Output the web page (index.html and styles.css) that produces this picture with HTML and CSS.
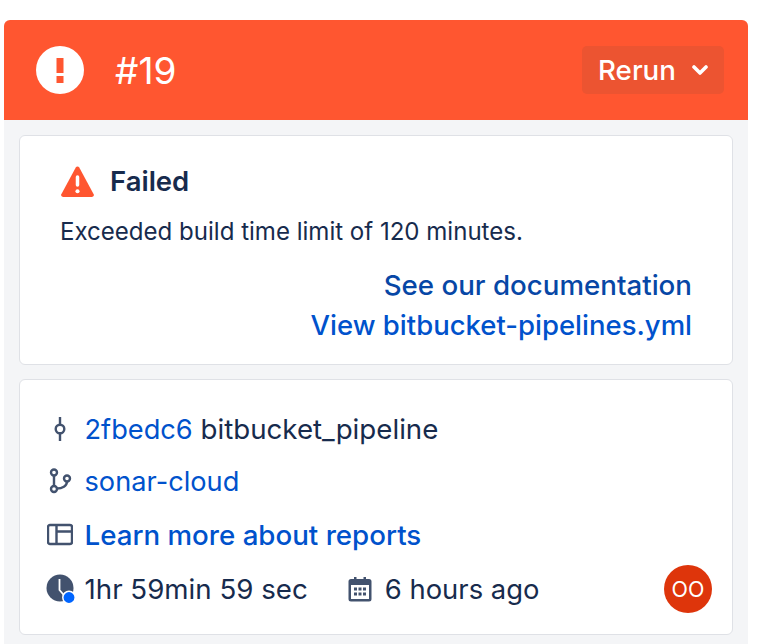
FILE: index.html
```html
<!DOCTYPE html>
<html lang="en">
<head>
<meta charset="utf-8">
<title>Pipeline #19</title>
<link rel="stylesheet" href="styles.css">
</head>
<body>
<main class="panel">
  <header class="banner">
    <svg class="banner-icon" viewBox="0 0 48 48" aria-hidden="true"><circle cx="24" cy="24" r="24" fill="#fff"/><rect x="20.5" y="12" width="7" height="15" fill="#ff5630"/><rect x="20.5" y="30" width="7" height="7" fill="#ff5630"/></svg>
    <h1 class="build-no">#19</h1>
    <button class="rerun" type="button">Rerun
      <svg class="chev" viewBox="0 0 16 12" aria-hidden="true"><path d="M2 3l6 6 6-6" fill="none" stroke="#fff" stroke-width="3.600" stroke-linecap="round" stroke-linejoin="round"/></svg>
    </button>
  </header>
  <div class="body">
    <section class="card failed">
      <div class="failed-head">
        <svg class="warn" viewBox="0 0 34 32" aria-hidden="true"><path d="M17 1.500c.7 0 1.300.4 1.700 1l14 26c.6 1.200-.2 2.500-1.600 2.500H2.900c-1.400 0-2.200-1.300-1.600-2.500l14-26c.4-.6 1-1 1.700-1z" fill="#ff5630"/><rect x="15.300" y="10" width="3.400" height="11" rx="1.700" fill="#fff"/><circle cx="17" cy="25.500" r="2" fill="#fff"/></svg>
        <h2 class="failed-title">Failed</h2>
      </div>
      <p class="failed-msg">Exceeded build time limit of 120 minutes.</p>
      <div class="failed-links">
        <a class="link link-dark" href="#">See our documentation</a>
        <a class="link" href="#">View bitbucket-pipelines.yml</a>
      </div>
    </section>
    <section class="card info">
      <div class="row row-commit">
        <span class="ico-slot">
          <svg class="ico" viewBox="0 0 26 26" aria-hidden="true"><path d="M13 1v7.500M13 17.500V25" stroke="#42526e" stroke-width="2.400" fill="none"/><circle cx="13" cy="13" r="4.300" fill="none" stroke="#42526e" stroke-width="2.400"/></svg>
        </span>
        <span><a class="text-link" href="#">2fbedc6</a> bitbucket_pipeline</span>
      </div>
      <div class="row row-branch">
        <span class="ico-slot">
          <svg class="ico" viewBox="0 0 26 26" aria-hidden="true"><g fill="none" stroke="#42526e" stroke-width="2.400"><circle cx="7" cy="4.500" r="3"/><circle cx="7" cy="21" r="3"/><circle cx="20" cy="10.500" r="3"/><path d="M7 7.500V18M10 20.500c5 0 10-2.500 10-7"/></g></svg>
        </span>
        <a class="text-link" href="#">sonar-cloud</a>
      </div>
      <div class="row row-reports">
        <span class="ico-slot">
          <svg class="ico" viewBox="0 0 26 26" aria-hidden="true"><g fill="none" stroke="#42526e" stroke-width="2.400"><rect x="1" y="3" width="24" height="19" rx="2"/><path d="M9.500 3v19M9.500 9.500H25"/></g></svg>
        </span>
        <a class="text-link text-link-strong" href="#">Learn more about reports</a>
      </div>
      <div class="row row-meta">
        <span class="ico-slot">
          <svg class="ico-clock" viewBox="0 0 30 30" aria-hidden="true"><circle cx="14" cy="14" r="13.500" fill="#42526e"/><path d="M13.500 5v11l6 7" fill="none" stroke="#fff" stroke-width="1.800"/><circle cx="23" cy="23.500" r="6.200" fill="#0065ff" stroke="#fff" stroke-width="1.500"/></svg>
        </span>
        <span class="duration">1hr 59min 59 sec</span>
        <svg class="ico-cal" viewBox="0 0 24 26" aria-hidden="true"><path d="M3 3h3V1h2.500v2h7V1H18v2h3a2.500 2.500 0 0 1 2.500 2.500V23a2.500 2.500 0 0 1-2.500 2.500H3A2.500 2.500 0 0 1 .5 23V5.500A2.500 2.500 0 0 1 3 3z" fill="#42526e"/><rect x="3" y="9" width="18" height="14" fill="#fff"/><path d="M6 11.500h3v3H6zM10.500 11.500h3v3h-3zM15 11.500h3v3h-3zM6 16.500h3v3H6zM10.500 16.500h3v3h-3zM15 16.500h3v3h-3z" fill="#42526e"/></svg>
        <span class="ago">6 hours ago</span>
        <span class="avatar">OO</span>
      </div>
    </section>
  </div>
</main>
</body>
</html>
```
FILE: styles.css
```css
* { box-sizing: border-box; }
html, body { height: 100%; }
body {
  margin: 0;
  padding: 20px 26px 0 4px;
  background: #fff;
  font-family: Inter, "Liberation Sans", sans-serif;
  color: #172b4d;
  overflow: hidden;
}
.panel {
  height: 624px;
  background: #f4f5f7;
  border-radius: 6px 6px 0 0;
  overflow: hidden;
}
.banner {
  height: 100px;
  background: #ff5630;
  display: flex;
  align-items: center;
  padding: 0 24px 0 32px;
}
.banner-icon { width: 48px; height: 48px; flex: none; }
.build-no {
  margin: 0 0 0 31px;
  font-size: 37px;
  font-weight: 400;
  color: #fff;
}
.rerun {
  margin-left: auto;
  width: 142px;
  height: 48px;
  border: 0;
  border-radius: 5px;
  background: #ec5431;
  color: #fff;
  font: 500 27.700px Inter, "Liberation Sans", sans-serif;
  display: flex;
  align-items: center;
  justify-content: center;
  gap: 16px;
  padding: 0;
}
.chev { width: 16px; height: 12px; }
.body {
  padding: 15px 15px 0;
  display: flex;
  flex-direction: column;
  gap: 14px;
}
.card {
  background: #fff;
  border: 1px solid #dfe1e6;
  border-radius: 6px;
}
.failed { height: 230px; padding: 27px 40px 0 41px; }
.failed-head { display: flex; align-items: center; gap: 15px; height: 36px; }
.warn { width: 35px; height: 33px; margin-left: -1px; flex: none; }
.failed-title { margin: 0; font-size: 27.500px; font-weight: 600; color: #172b4d; }
.failed-msg { margin: 15px 0 0 -1px; font-size: 24.050px; line-height: 36px; color: #172b4d; }
.failed-links { margin-top: 17px; display: flex; flex-direction: column; align-items: flex-end; gap: 4px; }
.link { font-size: 27.500px; line-height: 36px; font-weight: 500; color: #0052cc; text-decoration: none; }
.link-dark { color: #0747a6; font-size: 27.700px; }
.info { height: 256px; padding: 29px 20px 0 26px; display: flex; flex-direction: column; }
.row { display: flex; align-items: center; font-size: 27.700px; height: 40px; }
.row-branch { margin-top: 12px; }
.row-reports { margin-top: 14px; }
.row-meta { margin-top: 14px; }
.ico-slot { width: 38.500px; flex: none; display: flex; justify-content: flex-start; align-items: center; }
.ico { width: 26px; height: 26px; margin-left: 1px; }
.ico-clock { width: 30px; height: 30px; margin-left: 0; }
.ico-cal { width: 24px; height: 26px; margin-left: 40px; flex: none; }
.text-link { color: #0052cc; text-decoration: none; font-size: 27.200px; }
.text-link-strong { font-weight: 500; font-size: 27.700px; }
.ago { margin-left: 13px; font-size: 27.400px; }
.avatar {
  margin-left: auto;
  width: 48px;
  height: 48px;
  border-radius: 50%;
  background: #de350b;
  color: #fff;
  font-size: 21.500px;
  display: flex;
  align-items: center;
  justify-content: center;
}
```
